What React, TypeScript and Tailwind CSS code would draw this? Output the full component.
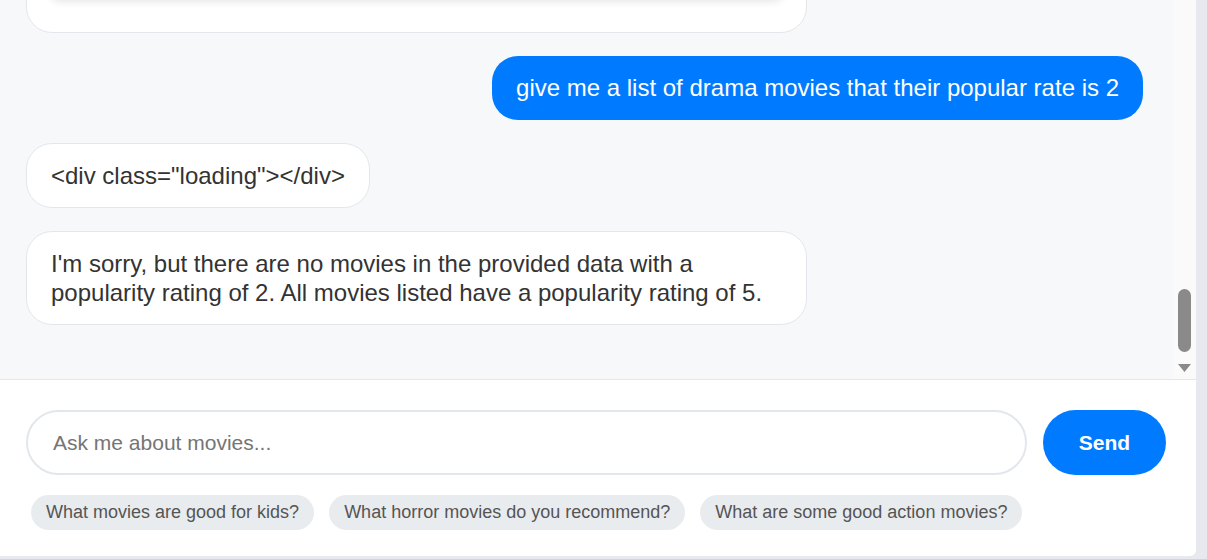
import React from "react";

const suggestions = [
  "What movies are good for kids?",
  "What horror movies do you recommend?",
  "What are some good action movies?",
];

const BotBubble = ({ children }: { children: React.ReactNode }) => (
  <div className="self-start max-w-[781px] rounded-[26px] border border-[#e3e7ec] bg-white px-6 py-[17px] text-[24px] leading-[29px] text-[#333333]">
    {children}
  </div>
);

const UserBubble = ({ children }: { children: React.ReactNode }) => (
  <div className="self-end rounded-[26px] bg-[#007bff] px-6 py-[17px] text-[24px] leading-[30px] text-white">
    {children}
  </div>
);

const Scrollbar = () => (
  <div className="flex w-[23px] shrink-0 flex-col items-center justify-end bg-[#fafafa] pb-[6px]">
    <div className="h-[63px] w-[13px] rounded-full bg-[#8a8a8a]" />
    <svg width="15" height="10" viewBox="0 0 15 10" className="mt-[11px]">
      <path d="M1 1 H14 L7.5 9 Z" fill="#8a8a8a" />
    </svg>
  </div>
);

export default function App() {
  return (
    <div
      className="flex h-[559px] w-full overflow-hidden bg-[#e8e9ee]"
      style={{ fontFamily: '"Liberation Sans", Arial, sans-serif' }}
    >
      <div className="flex h-[556px] w-[1196px] shrink-0 flex-col overflow-hidden rounded-br-[6px] bg-white">
        {/* messages */}
        <div className="flex h-[380px] shrink-0 border-b border-[#e5e7eb] bg-[#f7f8fa]">
          <div className="flex flex-1 flex-col justify-end gap-[23px] overflow-hidden pb-[54px] pl-[26px] pr-[30px]">
            <div className="self-start w-[781px] rounded-[26px] border border-[#e3e7ec] bg-white px-6 pb-4">
              <div className="mb-[17px] h-[300px] rounded-lg bg-white shadow-[0_2px_8px_rgba(0,0,0,0.12)]" />
            </div>
            <UserBubble>give me a list of drama movies that their popular rate is 2</UserBubble>
            <BotBubble>&lt;div class="loading"&gt;&lt;/div&gt;</BotBubble>
            <BotBubble>
              I'm sorry, but there are no movies in the provided data with a popularity rating of 2. All
              movies listed have a popularity rating of 5.
            </BotBubble>
          </div>
          <Scrollbar />
        </div>

        {/* input */}
        <div className="flex flex-col pl-[26px] pr-[30px] pt-[30px]">
          <div className="flex gap-4">
            <input
              type="text"
              placeholder="Ask me about movies..."
              className="h-[65px] flex-1 rounded-full border-2 border-[#e2e7ed] bg-white px-[25px] text-[21px] text-[#333] placeholder:text-[#757575] outline-none"
            />
            <button className="h-[65px] w-[123px] rounded-full bg-[#007bff] text-[21px] font-bold text-white">
              Send
            </button>
          </div>
          <div className="ml-[5px] mt-[20px] flex gap-[15px]">
            {suggestions.map((s) => (
              <button
                key={s}
                className="h-[35px] rounded-full bg-[#e9ecef] px-[15px] text-[18px] text-[#555]"
              >
                {s}
              </button>
            ))}
          </div>
        </div>
      </div>
    </div>
  );
}
